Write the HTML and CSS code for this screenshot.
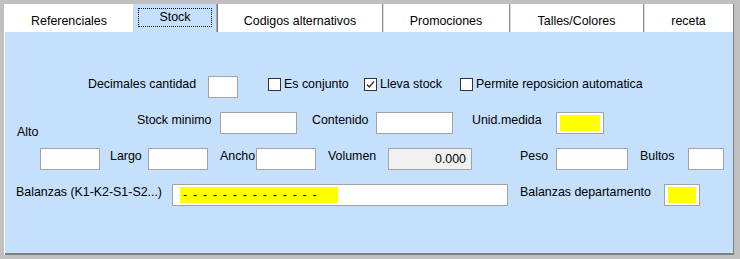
FILE: index.html
```html
<!DOCTYPE html>
<html lang="es">
<head>
<meta charset="utf-8">
<title>Stock</title>
<link rel="stylesheet" href="styles.css">
</head>
<body>
<div class="window">
  <div class="tabs">
    <div class="tab t-ref">Referenciales</div>
    <div class="tab tab-active t-stock"><span class="focus">Stock</span></div>
    <div class="tab t-cod">Codigos alternativos</div>
    <div class="tab sep t-pro">Promociones</div>
    <div class="tab sep t-tal">Talles/Colores</div>
    <div class="tab sep t-rec">receta</div>
  </div>
  <div class="panel">
    <div class="row r1">
      <span class="lbl w-dec">Decimales cantidad</span>
      <span class="inp w30"></span>
      <label class="chk c1"><span class="box"></span>Es conjunto</label>
      <label class="chk c2"><span class="box"><svg width="11" height="11" viewBox="0 0 11 11"><polyline points="2,5.5 4.3,8 9,2.5" fill="none" stroke="#333" stroke-width="1.4"/></svg></span>Lleva stock</label>
      <label class="chk c3"><span class="box"></span>Permite reposicion automatica</label>
    </div>
    <div class="row r2">
      <span class="lbl w-alto">Alto</span>
      <span class="lbl w-smin">Stock minimo</span>
      <span class="inp w77"></span>
      <span class="lbl w-cont">Contenido</span>
      <span class="inp w77"></span>
      <span class="lbl w-unid">Unid.medida</span>
      <span class="inp w48 yel-wrap"><span class="yel"></span></span>
    </div>
    <div class="row r3">
      <span class="inp w60 first"></span>
      <span class="lbl w-largo">Largo</span>
      <span class="inp w60"></span>
      <span class="lbl w-ancho">Ancho</span>
      <span class="inp w60"></span>
      <span class="lbl w-vol">Volumen</span>
      <span class="inp w84 ro">0.000</span>
      <span class="lbl w-peso">Peso</span>
      <span class="inp w72"></span>
      <span class="lbl w-bul">Bultos</span>
      <span class="inp w36"></span>
    </div>
    <div class="row r4">
      <span class="lbl w-bal">Balanzas (K1-K2-S1-S2...)</span>
      <span class="inp w336 bal-wrap"><span class="yel bal">- - - - - - - - - - - - - -</span></span>
      <span class="lbl w-dep">Balanzas departamento</span>
      <span class="inp w36 yel-wrap"><span class="yel"></span></span>
    </div>
  </div>
</div>
</body>
</html>
```

FILE: styles.css
```css
html, body {
  margin: 0;
  padding: 0;
}
body {
  background: #c0c0c0;
  font-family: "Liberation Sans", Arial, sans-serif;
  font-size: 12.4px;
  line-height: 16px;
  color: #000;
  height: 259px;
  overflow: hidden;
}
.window {
  margin: 4px 0 0 4px;
  width: 728px;
  border-left: 1px solid #ffffff;
  border-right: 1px solid #808080;
}
.tabs {
  display: flex;
  height: 28px;
  background: #ffffff;
}
.tab {
  box-sizing: border-box;
  height: 28px;
  padding-top: 9px;
  text-align: center;
  white-space: nowrap;
}
.t-ref { width: 128px; }
.t-stock { width: 85px; }
.t-cod { width: 164px; }
.t-pro { width: 127px; }
.t-tal { width: 134px; }
.t-rec { width: 90px; }
.sep {
  border-left: 1px solid #8c8c8c;
  box-shadow: inset 1px 0 0 #dcdcdc;
}
.tab-active {
  background: #c5e0fc;
  padding-top: 0;
  border-right: 1px solid #707070;
  box-shadow: inset -1px 0 0 #a8a8a8;
}
.focus {
  display: block;
  box-sizing: border-box;
  margin: 4px 5px 0 5px;
  height: 19px;
  border: 1px dotted #000;
  line-height: 17px;
}
.panel {
  box-sizing: border-box;
  height: 223px;
  padding-top: 44px;
  background: #c5e0fc;
  border-bottom: 2px solid #808080;
}
.row {
  display: flex;
  align-items: flex-start;
  height: 22px;
  margin-bottom: 14px;
}
.lbl {
  display: block;
  flex: none;
  white-space: nowrap;
  line-height: 16px;
}
.inp {
  display: block;
  flex: none;
  box-sizing: border-box;
  height: 22px;
  background: #ffffff;
  border: 1px solid #a3a3a3;
}
.w30 { width: 30px; }
.w36 { width: 36px; }
.w48 { width: 48px; }
.w60 { width: 60px; }
.w72 { width: 72px; }
.w77 { width: 77px; }
.w84 { width: 84px; }
.w336 { width: 336px; }

/* row 1 */
.w-dec { width: 120px; margin-left: 83px; }
.chk {
  display: flex;
  align-items: flex-start;
  flex: none;
  white-space: nowrap;
}
.c1 { margin-left: 30px; width: 96px; }
.c2 { width: 96px; }
.box {
  box-sizing: border-box;
  width: 13px;
  height: 13px;
  margin: 2px 3px 0 0;
  border: 1px solid #333333;
  background: #ffffff;
  display: block;
}
.box svg { display: block; }

/* row 2 */
.w-alto { width: 120px; margin-left: 12px; margin-top: 12px; }
.w-smin { width: 83px; }
.w-cont { width: 64px; margin-left: 15px; }
.w-unid { width: 84px; margin-left: 19px; }
.yel-wrap { padding: 2px 3px 2px 3px; }
.yel {
  display: block;
  height: 16px;
  background: #ffff00;
}

/* row 3 */
.first { margin-left: 35px; }
.w-largo { width: 38px; margin-left: 10px; }
.w-ancho { width: 36px; margin-left: 12px; }
.w-vol { width: 60px; margin-left: 12px; }
.ro {
  background: #f0f0f0;
  text-align: right;
  padding-right: 5px;
  line-height: 20px;
}
.w-peso { width: 36px; margin-left: 48px; }
.w-bul { width: 48px; margin-left: 12px; }

/* row 4 */
.w-bal { width: 156px; margin-left: 11px; }
.bal-wrap { padding: 2px 0 0 7px; }
.bal {
  width: 158px;
  box-sizing: border-box;
  padding-left: 3px;
  letter-spacing: 1.2px;
  white-space: nowrap;
  overflow: hidden;
  line-height: 16px;
}
.w-dep { width: 144px; margin-left: 12px; }
```
